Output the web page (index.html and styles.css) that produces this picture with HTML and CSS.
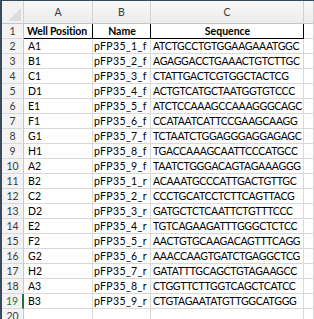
FILE: index.html
```html
<!DOCTYPE html>
<html>
<head>
<meta charset="utf-8">
<link rel="stylesheet" href="styles.css">
</head>
<body>
<div class="sheet">
  <div class="hd corner"></div>
  <div class="hd col">A</div>
  <div class="hd col">B</div>
  <div class="hd col">C</div>
  <div class="hd col"></div>

  <div class="rh">1</div>
  <div class="c title pos">Well Position</div>
  <div class="c title">Name</div>
  <div class="c title">Sequence</div>
  <div class="c d"></div>

  <div class="rh">2</div><div class="c pos">A1</div><div class="c nm">pFP35_1_f</div><div class="c seq">ATCTGCCTGTGGAAGAAATGGC</div><div class="c d"></div>
  <div class="rh">3</div><div class="c pos">B1</div><div class="c nm">pFP35_2_f</div><div class="c seq">AGAGGACCTGAAACTGTCTTGC</div><div class="c d"></div>
  <div class="rh">4</div><div class="c pos">C1</div><div class="c nm">pFP35_3_f</div><div class="c seq">CTATTGACTCGTGGCTACTCG</div><div class="c d"></div>
  <div class="rh">5</div><div class="c pos">D1</div><div class="c nm">pFP35_4_f</div><div class="c seq">ACTGTCATGCTAATGGTGTCCC</div><div class="c d"></div>
  <div class="rh">6</div><div class="c pos">E1</div><div class="c nm">pFP35_5_f</div><div class="c seq">ATCTCCAAAGCCAAAGGGCAGC</div><div class="c d"></div>
  <div class="rh">7</div><div class="c pos">F1</div><div class="c nm">pFP35_6_f</div><div class="c seq">CCATAATCATTCCGAAGCAAGG</div><div class="c d"></div>
  <div class="rh">8</div><div class="c pos">G1</div><div class="c nm">pFP35_7_f</div><div class="c seq">TCTAATCTGGAGGGAGGAGAGC</div><div class="c d"></div>
  <div class="rh">9</div><div class="c pos">H1</div><div class="c nm">pFP35_8_f</div><div class="c seq">TGACCAAAGCAATTCCCATGCC</div><div class="c d"></div>
  <div class="rh">10</div><div class="c pos">A2</div><div class="c nm">pFP35_9_f</div><div class="c seq">TAATCTGGGACAGTAGAAAGGG</div><div class="c d"></div>
  <div class="rh">11</div><div class="c pos">B2</div><div class="c nm">pFP35_1_r</div><div class="c seq">ACAAATGCCCATTGACTGTTGC</div><div class="c d"></div>
  <div class="rh">12</div><div class="c pos">C2</div><div class="c nm">pFP35_2_r</div><div class="c seq">CCCTGCATCCTCTTCAGTTACG</div><div class="c d"></div>
  <div class="rh">13</div><div class="c pos">D2</div><div class="c nm">pFP35_3_r</div><div class="c seq">GATGCTCTCAATTCTGTTTCCC</div><div class="c d"></div>
  <div class="rh">14</div><div class="c pos">E2</div><div class="c nm">pFP35_4_r</div><div class="c seq">TGTCAGAAGATTTGGGCTCTCC</div><div class="c d"></div>
  <div class="rh">15</div><div class="c pos">F2</div><div class="c nm">pFP35_5_r</div><div class="c seq">AACTGTGCAAGACAGTTTCAGG</div><div class="c d"></div>
  <div class="rh">16</div><div class="c pos">G2</div><div class="c nm">pFP35_6_r</div><div class="c seq">AAACCAAGTGATCTGAGGCTCG</div><div class="c d"></div>
  <div class="rh">17</div><div class="c pos">H2</div><div class="c nm">pFP35_7_r</div><div class="c seq">GATATTTGCAGCTGTAGAAGCC</div><div class="c d"></div>
  <div class="rh">18</div><div class="c pos">A3</div><div class="c nm">pFP35_8_r</div><div class="c seq">CTGGTTCTTGGTCAGCTCATCC</div><div class="c d"></div>
  <div class="rh sel">19</div><div class="c pos">B3</div><div class="c nm">pFP35_9_r</div><div class="c seq">CTGTAGAATATGTTGGCATGGG</div><div class="c d"></div>
  <div class="rh">20</div><div class="c"></div><div class="c"></div><div class="c"></div><div class="c d"></div>
</div>
</body>
</html>
```
FILE: styles.css
```css
* { box-sizing: border-box; }
html, body { margin: 0; padding: 0; background: #ffffff; }
body { overflow: hidden; }
.sheet {
  display: grid;
  grid-template-columns: 22px 69px 58px 153px 1fr;
  grid-auto-rows: 15px;
  grid-template-rows: 23px;
  border-left: 2px solid #3b4a5a;
  border-top: 1px solid #3b4a5a;
  font-family: Lato, "Open Sans", sans-serif;
  font-size: 10.5px;
  width: 314px;
  height: 319px;
  overflow: hidden;
}
.hd {
  background: linear-gradient(#f7f7f7, #ececec);
  border-right: 1px solid #d2d2d2;
  border-bottom: 1px solid #c4c4c4;
  color: #3a3a3a;
  display: flex;
  align-items: center;
  justify-content: center;
  font-size: 10.5px;
}
.corner {
  position: relative;
  background: #f2f2f2;
}
.corner::after {
  content: "";
  position: absolute;
  right: 2px;
  bottom: 2px;
  width: 0;
  height: 0;
  border-left: 13px solid transparent;
  border-bottom: 13px solid #dcdcdc;
}
.rh {
  background: #f3f3f3;
  border-right: 1px solid #c8c8c8;
  border-bottom: 1px solid #d9d9d9;
  color: #3a3a3a;
  display: flex;
  align-items: center;
  justify-content: center;
  font-size: 10.5px;
}
.rh.sel {
  color: #1e7145;
  border-right: 2px solid #1e7145;
}
.c {
  border-right: 1px solid #d9d9d9;
  border-bottom: 1px solid #d9d9d9;
  color: #000;
  display: flex;
  align-items: center;
  padding: 0 1px 0 2px;
  white-space: nowrap;
  overflow: hidden;
}
.c.pos { padding-left: 4px; }
.c.nm { letter-spacing: 0.35px; padding-left: 1px; }
.c.seq { letter-spacing: -0.25px; }
.c.title {
  font-weight: bold;
  letter-spacing: 0;
  justify-content: center;
  border-right: 1px solid #000;
  border-bottom: 1px solid #000;
}
.c.title.pos { justify-content: flex-start; padding-left: 3px; letter-spacing: -0.15px; }
```
